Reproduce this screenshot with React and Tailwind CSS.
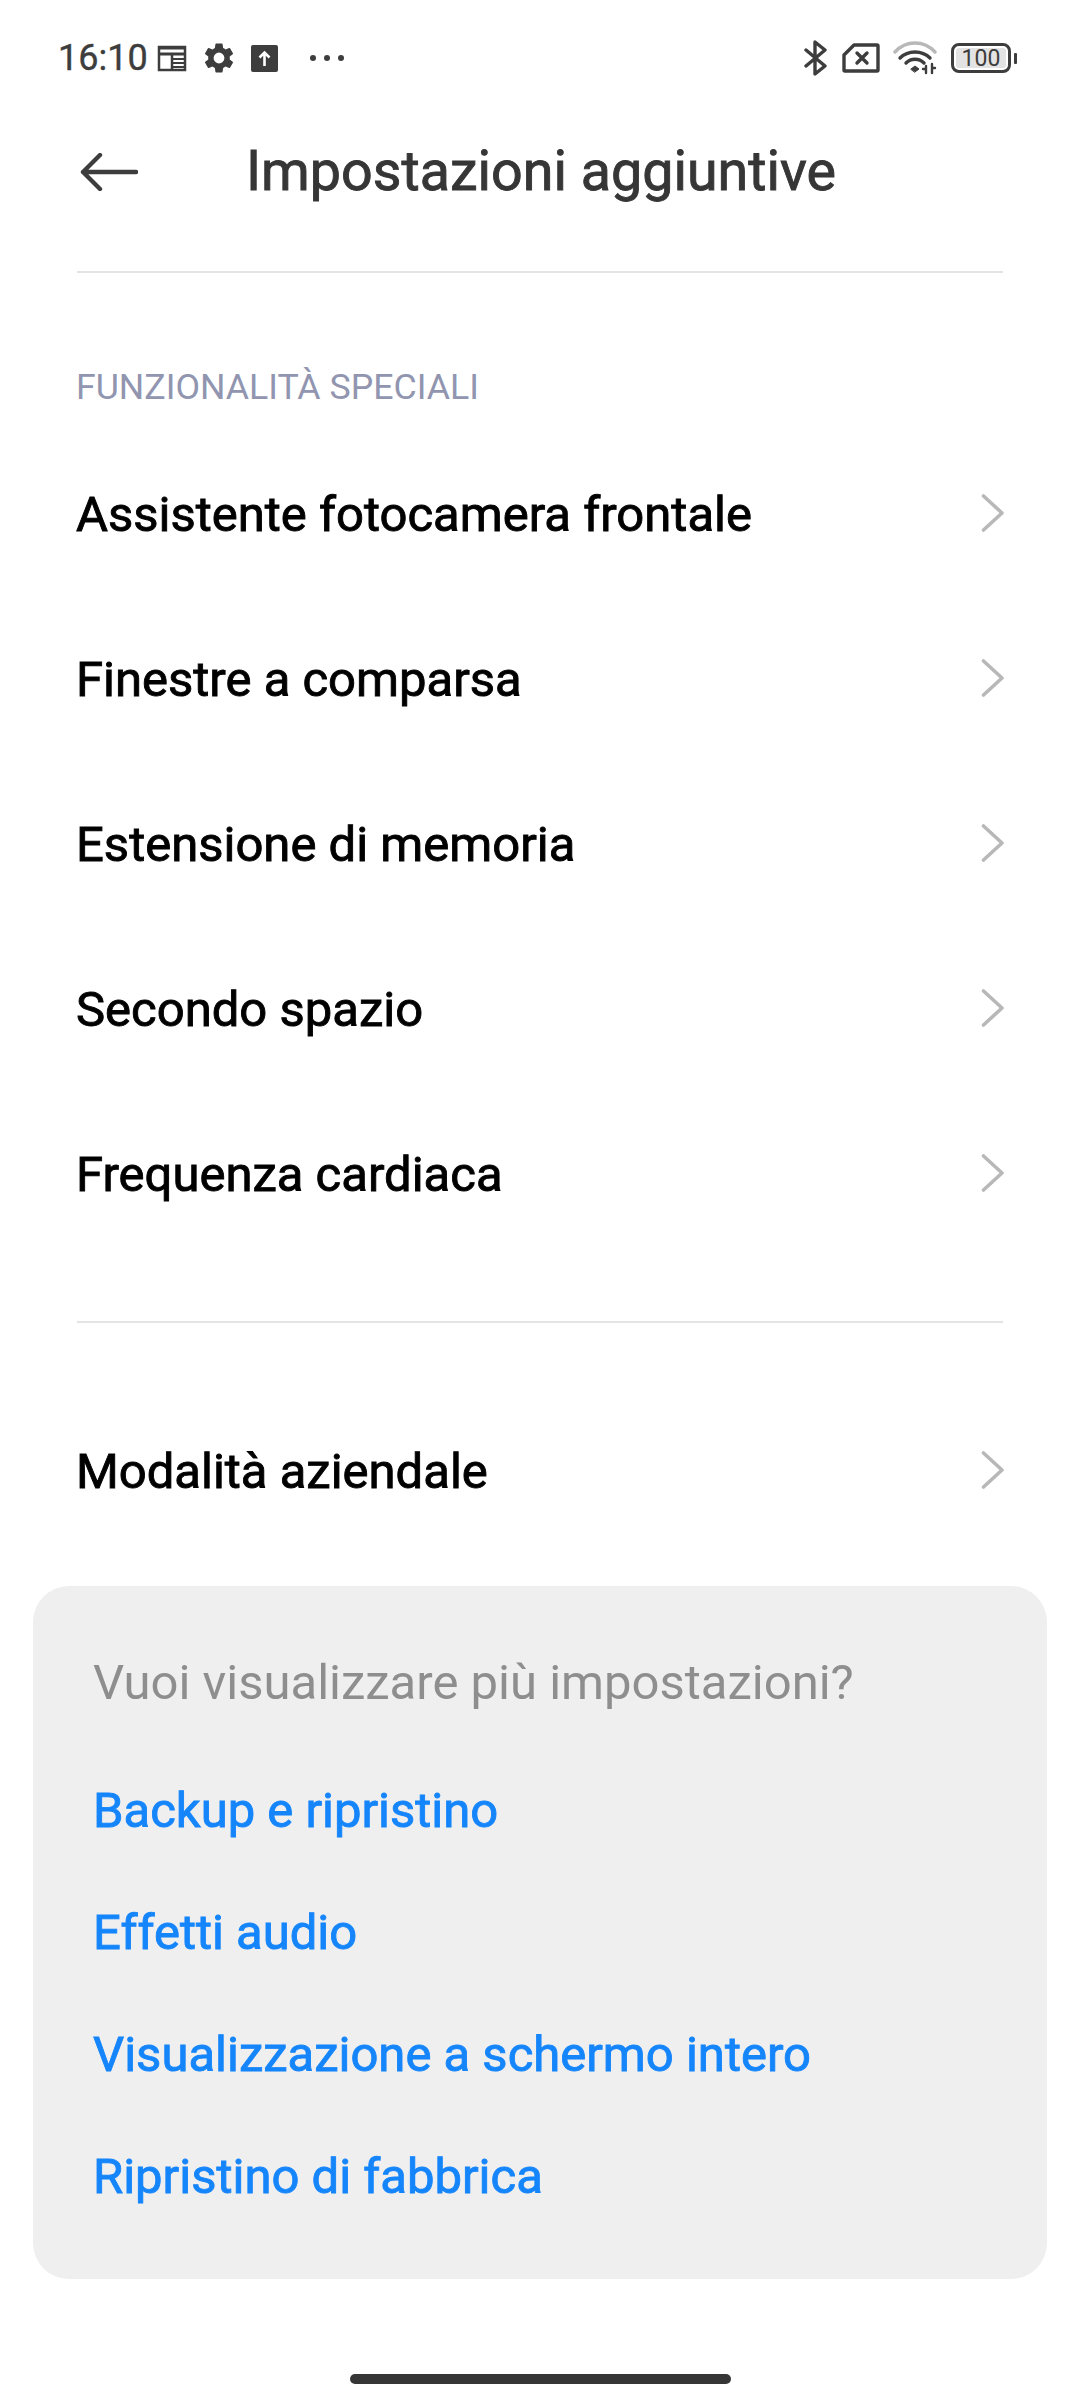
const rows = ["Assistente fotocamera frontale", "Finestre a comparsa", "Estensione di memoria", "Secondo spazio", "Frequenza cardiaca"];
const links = ["Backup e ripristino", "Effetti audio", "Visualizzazione a schermo intero", "Ripristino di fabbrica"];

function Row({ label }) {
  return (
    <div className="flex h-[165px] items-center justify-between">
      <span className="text-[49px] leading-none text-black [-webkit-text-stroke:0.9px_#000]">{label}</span>
      <svg className="-mt-[3px]" width="23" height="38" viewBox="0 0 23 38" fill="none" stroke="#b8b8b8" strokeWidth="3.6" strokeLinecap="round" strokeLinejoin="round">
        <path d="M2.5 2 L21 19 L2.5 36" />
      </svg>
    </div>
  );
}

function StatusBar() {
  return (
    <div className="flex h-[58px] items-center justify-between pl-[58px] pr-[63px] text-[#3d3d3d]">
      <div className="flex items-center">
        <span className="text-[36px] leading-none [-webkit-text-stroke:0.4px_#3d3d3d]">16:10</span>
        <svg className="ml-[9px]" width="30" height="28" viewBox="0 0 30 28" fill="none">
          <path d="M2 3 H28 V26 H2 Z" stroke="#3d3d3d" strokeWidth="2.5" />
          <path d="M2 4 H28 M2 10 H28" stroke="#3d3d3d" strokeWidth="3" />
          <path d="M15 10 V25" stroke="#3d3d3d" strokeWidth="2.5" />
          <path d="M15 15 H28 M15 19 H28 M15 23 H28" stroke="#3d3d3d" strokeWidth="2" />
        </svg>
        <svg className="ml-[14px]" width="36" height="36" viewBox="0 0 24 24" fill="#3d3d3d">
          <path d="M19.14 12.94c.04-.3.06-.61.06-.94 0-.32-.02-.64-.07-.94l2.03-1.58a.49.49 0 0 0 .12-.61l-1.92-3.32a.49.49 0 0 0-.59-.22l-2.39.96a7 7 0 0 0-1.62-.94l-.36-2.54a.48.48 0 0 0-.48-.41h-3.84a.48.48 0 0 0-.47.41l-.36 2.54c-.59.24-1.13.57-1.62.94l-2.39-.96a.49.49 0 0 0-.59.22L2.73 8.87a.48.48 0 0 0 .12.61l2.03 1.58c-.05.3-.08.63-.08.94s.02.64.07.94l-2.03 1.58a.49.49 0 0 0-.12.61l1.92 3.32c.12.22.37.29.59.22l2.39-.96c.5.38 1.03.7 1.62.94l.36 2.54c.05.24.24.41.48.41h3.84c.24 0 .44-.17.47-.41l.36-2.54c.59-.24 1.13-.56 1.62-.94l2.39.96c.22.08.47 0 .59-.22l1.92-3.32a.47.47 0 0 0-.12-.61l-2.01-1.58zM12 15.6A3.6 3.6 0 1 1 12 8.4a3.6 3.6 0 0 1 0 7.2z" />
        </svg>
        <svg className="ml-[14px]" width="27" height="27" viewBox="0 0 27 27">
          <rect width="27" height="27" rx="2" fill="#3d3d3d" />
          <path d="M13.5 21 V8 M8.5 12.5 L13.5 7.5 L18.5 12.5" stroke="#fff" strokeWidth="2.6" fill="none" />
        </svg>
        <div className="ml-[32px] flex items-center gap-[8px]">
          <div className="h-[6px] w-[6px] rounded-full bg-[#3d3d3d]" />
          <div className="h-[6px] w-[6px] rounded-full bg-[#3d3d3d]" />
          <div className="h-[6px] w-[6px] rounded-full bg-[#3d3d3d]" />
        </div>
      </div>
      <div className="flex items-center">
        <svg width="24" height="36" viewBox="0 0 24 36" fill="none" stroke="#3d3d3d" strokeWidth="3.4" strokeLinecap="round" strokeLinejoin="round">
          <path d="M2 10 L21 26 L11 34 V2 L21 10 L2 26" />
        </svg>
        <svg className="ml-[14px]" width="38" height="30" viewBox="0 0 38 30" fill="none" stroke="#3d3d3d" strokeWidth="3.4" strokeLinecap="round" strokeLinejoin="round">
          <path d="M12 2 H35 a1 1 0 0 1 1 1 V27 a1 1 0 0 1 -1 1 H3 a1 1 0 0 1 -1 -1 V12 Z" />
          <path d="M15 10 L25 20 M25 10 L15 20" />
        </svg>
        <svg className="ml-[13px]" width="44" height="34" viewBox="0 0 44 34" fill="none" strokeLinecap="round">
          <path d="M2 11 C13 -1 31 -1 42 11" stroke="#b8b8b8" strokeWidth="3.4" />
          <path d="M7 17 C15 9 29 9 37 17" stroke="#3d3d3d" strokeWidth="3.4" />
          <path d="M13 22 C18 17 26 17 31 22" stroke="#3d3d3d" strokeWidth="3.4" />
          <path d="M18 28 L22 25 L26 28 L22 31 Z" fill="#3d3d3d" stroke="#3d3d3d" strokeWidth="1" />
          <path d="M33 25 V32 M39 23 V32 M30 28 H33 M39 27 H42" stroke="#3d3d3d" strokeWidth="2.4" />
        </svg>
        <div className="ml-[14px] flex items-center">
          <div className="flex h-[30px] w-[60px] items-center rounded-[8px] border-[3px] border-[#3d3d3d] p-[2px]">
            <div className="flex h-full w-full items-center justify-center rounded-[3px] bg-[#e3e3e3] text-[23px] leading-none text-[#3d3d3d]">100</div>
          </div>
          <div className="ml-[3px] h-[11px] w-[3px] rounded-[1px] bg-[#3d3d3d]" />
        </div>
      </div>
    </div>
  );
}

export default function App() {
  return (
    <div className="flex h-[2400px] w-[1080px] flex-col overflow-hidden bg-white font-['Roboto',sans-serif]">
      <div className="h-[29px]" />
      <StatusBar />
      <div className="mx-[77px] flex h-[186px] items-center border-b-2 border-[#e4e4e4] pb-[14px] pl-[3px]">
        <svg width="58" height="38" viewBox="0 0 58 38" fill="none" stroke="#3d3d3d" strokeWidth="4.4" strokeLinecap="round" strokeLinejoin="round">
          <path d="M3 19 H56 M20 2 L3 19 L20 36" />
        </svg>
        <span className="ml-[108px] text-[55.6px] leading-none text-[#363636] [-webkit-text-stroke:0.9px_#363636]">Impostazioni aggiuntive</span>
      </div>
      <div className="mx-[76px] mt-[93px] text-[35.7px] leading-[42px] text-[#9195b0]">FUNZIONALITÀ SPECIALI</div>
      <div className="mx-[76px] mt-[24px]">
        {rows.map((r) => (
          <Row key={r} label={r} />
        ))}
      </div>
      <div className="mx-[77px] mt-[64px] h-[2px] bg-[#e4e4e4]" />
      <div className="mx-[76px] mt-[66px]">
        <Row label="Modalità aziendale" />
      </div>
      <div className="mx-[33px] mt-[32px] flex h-[693px] flex-col rounded-[36px] bg-[#efeff0] px-[60px] pt-[72px]">
        <div className="text-[49px] leading-[50px] text-[#8e8e8e]">Vuoi visualizzare più impostazioni?</div>
        <div className="mt-[78px] flex flex-col gap-[72px]">
          {links.map((l) => (
            <div key={l} className="text-[49px] leading-[50px] text-[#1585fb] [-webkit-text-stroke:0.9px_#1585fb]">{l}</div>
          ))}
        </div>
      </div>
      <div className="mx-auto mt-[95px] h-[10px] w-[381px] rounded-full bg-[#363636]" />
    </div>
  );
}
